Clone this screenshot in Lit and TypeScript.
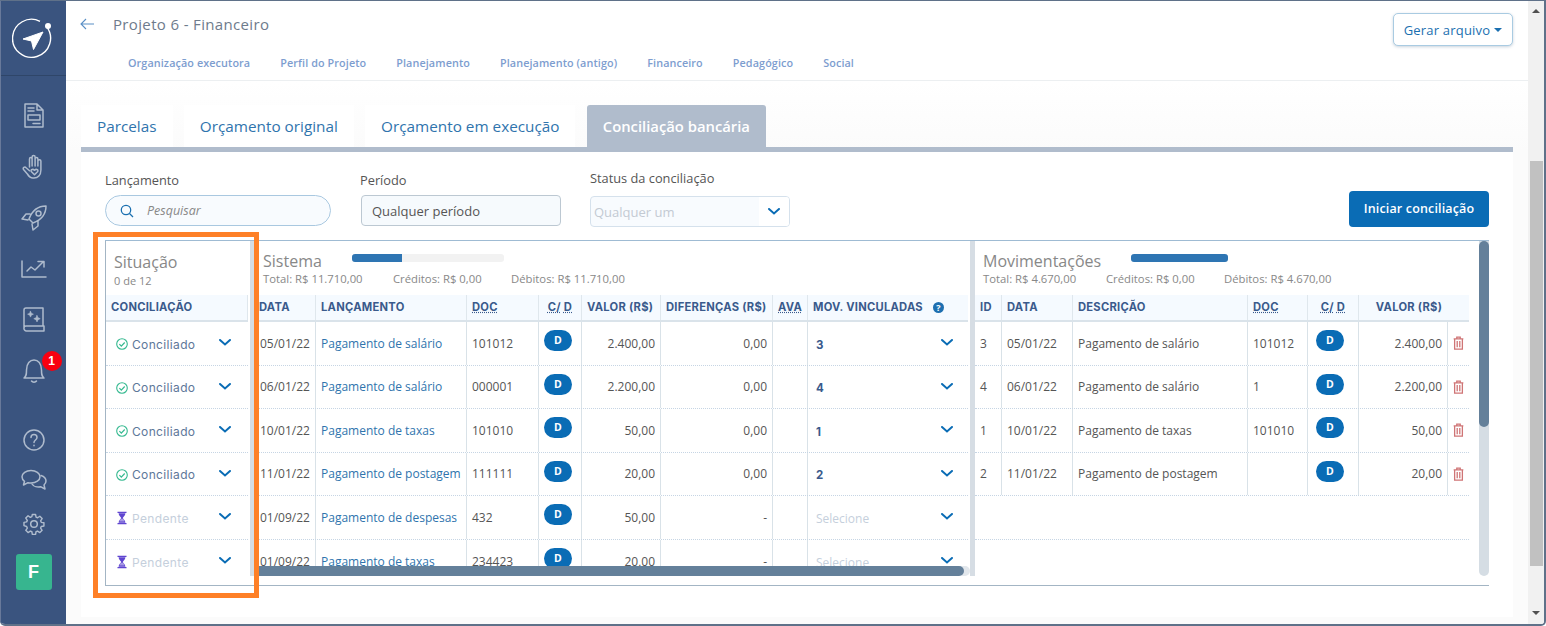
import { LitElement, html, css, svg } from "lit";
import { customElement } from "lit/decorators.js";

const chev = html`<svg class="chev" viewBox="0 0 12 7" width="12" height="7"><path d="M1 1l5 4.5L11 1" fill="none" stroke="#0a6cb5" stroke-width="2" stroke-linecap="round"/></svg>`;
const check = html`<svg class="st" viewBox="0 0 12 12" width="12" height="12"><circle cx="6" cy="6" r="5.3" fill="none" stroke="#35b990" stroke-width="1.100"/><path d="M3.400 6.200l1.900 1.900 3.400-3.600" fill="none" stroke="#35b990" stroke-width="1.200"/></svg>`;
const glass = html`<svg class="st" viewBox="0 0 12 14" width="12" height="14"><path d="M1.500 .7h9v1.300h-9zM1.500 12h9v1.300h-9z" fill="#5f45d0"/><path d="M2.600 2.200h6.800c0 2.200-2 3.400-2.600 4.800.6 1.400 2.600 2.600 2.600 4.800H2.600c0-2.200 2-3.400 2.600-4.800C4.600 5.600 2.600 4.400 2.600 2.200z" fill="#5f45d0"/><path d="M4.800 7.800h2.400l1.300 2.700H3.500z" fill="#fff" opacity=".45"/></svg>`;
const trash = html`<svg viewBox="0 0 10 13" width="11" height="14"><path d="M.5 2.600h9M3.400 2.400V1h3.200v1.400M1.400 2.800v9.400h7.200V2.800M3.800 4.600v5.800M6.200 4.600v5.800" fill="none" stroke="#cf7475" stroke-width="1.200"/></svg>`;

const I = (w: number, h: number, body: unknown) => html`<svg viewBox="0 0 ${w} ${h}" width=${w} height=${h} fill="none" stroke="#aebbcd" stroke-width="1.500" stroke-linejoin="round" stroke-linecap="round">${body}</svg>`;
const icons = {
  doc: I(20, 25, svg`<path d="M1 1h12l6 6v17H1zM13 1v6h6M4 5h6M4 8h6M9 20.500h7"/><rect x="4" y="12" width="12" height="5"/>`),
  hand: I(24, 25, svg`<path d="M7.500 13V5c0-2 2.600-2 2.600 0V3c0-2 3-2 3 0v2c0-2 2.800-2 2.800 0v2c0-1.700 3-1.700 3 0v9c0 5-3 8-7 8h-1c-2.500 0-4-1.500-5.500-4L1.500 15.500c-1-1.800 1.200-3.300 2.600-1.800l3.400 3M10.100 5v7M13.100 5v7M15.900 7v5"/><path d="M12.500 20.800l-3-3c-1.400-1.600.9-3.500 3-1.500 2.100-2 4.400-.1 3 1.500z"/>`),
  rocket: I(26, 26, svg`<path d="M25 1C17 1 11 6 8 14l4 4c8-3 13-9 13-17zM9 9H5L1 14l6 1M17 16v5l-5 4-1-6"/><circle cx="17.500" cy="8.500" r="2.500"/>`),
  chart: I(26, 18, svg`<path d="M1 1v16h24M6 11l4-4 4 3 8-8M17 1.500h6V7"/>`),
  book: I(22, 25, svg`<path d="M1 21V3a2 2 0 0 1 2-2h17v18H3a2 2 0 0 0-2 2 2.500 2.500 0 0 0 2.500 3H21v-5"/><path d="M7.500 4.300l.9 2 2 .9-2 .9-.9 2-.9-2-2-.9 2-.9zM14 8.500l1 2.200 2.200 1-2.200 1-1 2.200-1-2.200-2.200-1 2.200-1z" fill="#aebbcd" stroke-width=".6"/>`),
  bell: I(24, 26, svg`<path d="M2 20c2.500-2 2.500-4 2.500-8C4.500 5.500 8 2 12 2s7.500 3.500 7.500 10c0 4 0 6 2.500 8zM9.500 23c1 1.500 4 1.500 5 0"/>`),
  help: I(22, 22, svg`<circle cx="11" cy="11" r="10"/><path d="M8 8.500C8 6.500 9.500 5.500 11 5.500s3 1 3 3c0 2.500-3 2.500-3 5M11 16.300v.4"/>`),
  chat: I(26, 22, svg`<path d="M10 1.500c5 0 9 2.800 9 6.300s-4 6.200-9 6.200c-1 0-2 0-3-.3L2.500 16l1-3.700C1.700 11 1 9.500 1 7.800 1 4.300 5 1.500 10 1.500z"/><path d="M20 6.500c3 1 5 3 5 5.500 0 1.700-.8 3-2 4l1 4-4.500-2.300c-3 .7-7 0-8.500-2.700"/>`),
  gear: I(22, 22, svg`<circle cx="11" cy="11" r="3.300"/><path d="M9.300 1h3.400l.5 2.800 1.600.7 2.400-1.600 2.400 2.400-1.600 2.400.7 1.600 2.800.5v3.400l-2.800.5-.7 1.600 1.600 2.400-2.400 2.400-2.400-1.600-1.600.7-.5 2.800H9.300l-.5-2.800-1.600-.7-2.400 1.600-2.400-2.400 1.600-2.400-.7-1.600L.5 12.700V9.300l2.800-.5.7-1.600L2.400 4.800l2.400-2.400 2.400 1.600 1.600-.7z" transform="translate(.5 .5) scale(.95)"/>`),
};

const sis = [
  ["05/01/22", "Pagamento de salário", "101012", "2.400,00", "0,00", "3"],
  ["06/01/22", "Pagamento de salário", "000001", "2.200,00", "0,00", "4"],
  ["10/01/22", "Pagamento de taxas", "101010", "50,00", "0,00", "1"],
  ["11/01/22", "Pagamento de postagem", "111111", "20,00", "0,00", "2"],
  ["01/09/22", "Pagamento de despesas", "432", "50,00", "-", ""],
  ["01/09/22", "Pagamento de taxas", "234423", "20,00", "-", ""],
];
const mov = [
  ["3", "05/01/22", "Pagamento de salário", "101012", "2.400,00"],
  ["4", "06/01/22", "Pagamento de salário", "1", "2.200,00"],
  ["1", "10/01/22", "Pagamento de taxas", "101010", "50,00"],
  ["2", "11/01/22", "Pagamento de postagem", "", "20,00"],
];

@customElement("app-root")
export class AppRoot extends LitElement {
  static styles = css`
    :host { display: block; width: 1546px; height: 626px; overflow: hidden; font-family: "Open Sans", sans-serif; color: #555; }
    * { box-sizing: border-box; }
    .win { display: grid; grid-template-columns: 66px 1fr 16px; width: 100%; height: 100%; border: solid #5f7189; border-width: 1px 2px 2px 0; background: #fff; border-bottom-left-radius: 5px; border-bottom-right-radius: 5px; overflow: hidden; }
    .side { background: #3a547f; border-left: 1px solid #68799a; display: flex; flex-direction: column; align-items: center; }
    .logo { width: 100%; height: 75px; border-bottom: 1px solid #2f4669; display: flex; align-items: center; justify-content: center; padding-top: 1px; padding-right: 1px; }
    .slots { padding-top: 14px; display: flex; flex-direction: column; align-items: center; }
    .slot { height: 51px; width: 40px; display: flex; align-items: center; justify-content: center; position: relative; }
    .slot.s { height: 42px; }
    .slot.up2 { padding-bottom: 4px; }
    .slots2 { margin-top: 23px; display: flex; flex-direction: column; align-items: center; }
    .badge { position: absolute; left: 28px; top: 6px; width: 20px; height: 20px; border-radius: 50%; background: #f80010; color: #fff; font: 700 12px/20px "Liberation Sans", sans-serif; text-align: center; }
    .tile { margin-top: 9px; width: 36px; height: 36px; border-radius: 3px; background: #37b58f; color: #fff; font: 700 18px/36px "Liberation Sans", sans-serif; text-align: center; }

    .main { min-width: 0; display: flex; flex-direction: column; background: #fff; }
    .head { height: 80px; border-bottom: 1px solid #eceff1; display: flex; justify-content: space-between; padding: 11px 15px 0 14px; flex: none; }
    .title { display: flex; align-items: center; gap: 19px; height: 24px; font-size: 15px; color: #6e7b8c; letter-spacing: .35px; }
    .nav { display: flex; gap: 30px; margin: 17px 0 0 48px; font-size: 10.800px; font-weight: 600; color: #7d9dcf; line-height: 20px; letter-spacing: .1px; }
    .gen { height: 33px; width: 120px; margin-top: 1px; border: 1px solid #a9cbe2; border-radius: 5px; background: #fff; box-shadow: 0 1px 3px rgba(40,80,120,.25); color: #1a6fb0; font-size: 13px; display: flex; align-items: center; justify-content: center; gap: 4px; letter-spacing: .2px; }
    .caret { width: 0; height: 0; border: 4px solid transparent; border-top-color: #1a6fb0; border-bottom: 0; }

    .content { flex: 1; padding: 24px 15px 0; background: linear-gradient(#fff, #fbfbfb 70px, #fbfbfb); min-height: 0; }
    .tabs { display: flex; height: 42px; font-size: 15.300px; color: #2f74ad; }
    .tab { height: 42px; line-height: 42px; padding: 0 16px; background: #fff; margin-right: 11.300px; }
    .tab.a { background: #b0bccc; color: #fff; font-weight: 600; border-radius: 3px 3px 0 0; margin: 0; font-size: 14.800px; }
    .card { background: #fff; border-top: 5px solid #b0bccc; padding: 20px 24px 0; height: 470px; }
    .filters { display: flex; align-items: flex-end; height: 55px; }
    .f { display: flex; flex-direction: column; }
    .lab { font-size: 12.800px; line-height: 16px; color: #555; margin-bottom: 7px; }
    .f3 .lab { margin-bottom: 10px; }
    .f12 { margin-bottom: 1px; }
    .inp { height: 31px; display: flex; align-items: center; font-size: 13px; }
    .search { width: 226px; border: 1px solid #a9c8e0; border-radius: 16px; background: #f8fbfe; padding-left: 14px; gap: 13px; font-style: italic; font-size: 12.500px; color: #888; }
    .per { width: 200px; margin-left: 30px; border: 1px solid #bcc8d2; border-radius: 4px; background: #f6fafd; padding-left: 10px; color: #555; }
    .perl { margin-left: 29px; }
    .f3 { margin-left: 29px; }
    .status { width: 200px; border: 1px solid #d5e1ec; border-radius: 4px; background: #f8fbfe; padding-left: 3px; color: #c3cad3; justify-content: space-between; overflow: hidden; }
    .status span { display: flex; align-items: center; justify-content: center; width: 30px; height: 100%; background: #fff; }
    .btn { margin-left: auto; width: 140px; height: 36px; background: #0a6cb5; color: #fff; border-radius: 4px; font-size: 12.500px; font-weight: 600; text-align: center; line-height: 36px; letter-spacing: .15px; }

    .panels { position: relative; display: flex; height: 346px; margin-top: 13px; border-top: 1px solid #9fbbd3; border-bottom: 1px solid #a3b5c4; }
    .orange { position: absolute; left: -12px; top: -9px; width: 166px; height: 366px; border: 5px solid #fe8027; pointer-events: none; }
    .sit { width: 145px; flex: none; border-left: 1px solid #a3b5c4; overflow: hidden; }
    .gut { width: 4px; height: 335px; flex: none; background: #d5dde4; }
    .sis { width: 716px; flex: none; height: 335px; position: relative; overflow: hidden; }
    .split { width: 5px; height: 335px; flex: none; background: #d6dde4; }
    .mov { width: 504px; flex: none; height: 335px; overflow: hidden; }
    .vs { width: 10px; height: 335px; flex: none; background: #d5dde4; border-radius: 0 0 5px 5px; }
    .vs div { height: 186px; background: #64809a; border-radius: 5px; }
    .hs { position: absolute; left: 0; bottom: 0; width: 100%; height: 10px; background: #e2e7ec; border-radius: 0 5px 5px 0; }
    .hs div { height: 10px; width: 710px; background: #64809a; border-radius: 0 5px 5px 0; }

    .ph { height: 54px; position: relative; }
    .ptitle { font-size: 16px; line-height: 22px; color: #888; }
    .psub { display: flex; font-size: 11.300px; line-height: 14px; color: #888; white-space: nowrap; }
    .ph.a { padding: 10px 0 0 8px; }
    .ph.a .psub { margin-top: 1px; font-size: 11px; }
    .ph.b { padding: 9px 0 0 9px; }
    .ph.d { padding: 9px 0 0 8px; }
    .ph.b .psub span:nth-child(1) { width: 130px; }
    .ph.b .psub span:nth-child(2) { width: 118px; }
    .ph.d .psub span:nth-child(1) { width: 123px; }
    .ph.d .psub span:nth-child(2) { width: 118px; }
    .prog { position: absolute; top: 13px; height: 8px; border-radius: 3px; background: #f2f2f2; overflow: hidden; }
    .prog div { height: 8px; background: #2e75b3; }
    .ph.b .prog { left: 98px; width: 152px; }
    .ph.b .prog div { width: 50px; }
    .ph.d .prog { left: 156px; width: 97px; }
    .ph.d .prog div { width: 97px; }

    .r { display: grid; align-items: stretch; }
    .hd { height: 27px; background: #f5faff; border-bottom: 2px solid #dae3ea; font: 700 11.200px/25px Inter, sans-serif; color: #3a5a8c; white-space: nowrap; letter-spacing: .25px; }
    .rw { height: 43.500px; border-bottom: 1px dotted #c6d5e4; font-size: 12px; white-space: nowrap; color: #555; }
    .rw.last { border-bottom: 0; }
    .c { padding: 0 5px; display: flex; align-items: center; min-width: 0; border-right: 1px solid #d9e2e8; }
    .c.first { padding-left: 6px; }
    .c.n { border-right: 0; }
    .c.e { justify-content: flex-end; }
    .c.m { justify-content: center; }
    .c.bdg { align-items: flex-start; padding: 8px 0 0 5px; }
    .t4 .c.bdg { padding-left: 8px; }
    .link { color: #2f74ad; }
    abbr { text-decoration: underline dotted; }
    .pill { width: 28px; height: 21px; border-radius: 11px; background: #0a6cb5; color: #fff; font: 700 10.500px/21px "Open Sans", sans-serif; text-align: center; }
    .t3 { grid-template-columns: 62px 151px 72px 43px 79px 112px 35px 160px; width: 714px; }
    .t4 { grid-template-columns: 27px 71px 175px 60px 51px 89px 21px; width: 494px; }
    .t1 { grid-template-columns: 142px; width: 142px; }
    .sitc { padding: 2px 0 0 10px; font: 400 12px Inter, sans-serif; color: #5d7799; gap: 4px; letter-spacing: .35px; border-right: 0; }
    .sitc.p { color: #c5cfdc; }
    .sitc svg.chev { margin: -3px 17px 0 auto; }
    .mv { justify-content: space-between; padding: 0 15px 0 8px; font: 700 11.500px Inter, sans-serif; color: #3a5a8c; border-right: 0; }
    .mv svg { margin-top: -1px; }
    .mv span { padding-top: 3px; }
    .mv .sel { font: 400 12px "Open Sans", sans-serif; color: #c5cfdc; }
    .help { display: inline-block; width: 11px; height: 11px; border-radius: 50%; background: #1e6fb0; color: #fff; font: 700 9px/11px "Open Sans", sans-serif; text-align: center; margin: 0 19px 0 auto; letter-spacing: 0; flex: none; }
    .hmv { display: flex; align-items: center; padding: 0 0 0 5px; }
    .hc { padding: 0 5px; border-right: 1px solid #dfe7ed; overflow: hidden; }
    .hc.n { border-right: 0; }
    .hc.m { text-align: center; }
    .hc.v { grid-column: span 2; text-align: center; padding-right: 15px; }

    .sb { background: #f1f1f1; position: relative; display: flex; flex-direction: column; align-items: center; justify-content: space-between; padding: 8px 0 9px; }
    .up { border: 4px solid transparent; border-top: 0; border-bottom: 4px solid #505050; width: 0; height: 0; }
    .dn { border: 4px solid transparent; border-bottom: 0; border-top: 4px solid #505050; width: 0; height: 0; }
    .thumb { width: 13px; height: 405px; background: #c1c1c1; margin: 143px 0 40px; }
  `;

  render() {
    return html`<div class="win">
      <aside class="side">
        <div class="logo"><svg viewBox="0 0 42 42" width="42" height="42"><path d="M34.500 8.600A19 19 0 1 1 28 3.300" fill="none" stroke="#fff" stroke-width="1.400"/><circle cx="36" cy="8" r="3" fill="#fff"/><path d="M31 14L11 21l8.500 2 2 8.500z" fill="#fff" stroke="#fff" stroke-linejoin="round"/></svg></div>
        <div class="slots">
          <div class="slot">${icons.doc}</div><div class="slot">${icons.hand}</div><div class="slot">${icons.rocket}</div><div class="slot">${icons.chart}</div><div class="slot">${icons.book}</div>
          <div class="slot">${icons.bell}<div class="badge">1</div></div>
        </div>
        <div class="slots2">
          <div class="slot s">${icons.help}</div><div class="slot s up2">${icons.chat}</div><div class="slot s">${icons.gear}</div>
          <div class="tile">F</div>
        </div>
      </aside>
      <main class="main">
        <header class="head">
          <div>
            <div class="title"><svg viewBox="0 0 14 12" width="14" height="12"><path d="M14 6H1M6 1L1 6l5 5" fill="none" stroke="#5b90c6" stroke-width="1.100"/></svg><span>Projeto 6 - Financeiro</span></div>
            <nav class="nav"><span>Organização executora</span><span>Perfil do Projeto</span><span>Planejamento</span><span>Planejamento (antigo)</span><span>Financeiro</span><span>Pedagógico</span><span>Social</span></nav>
          </div>
          <div class="gen">Gerar arquivo <i class="caret"></i></div>
        </header>
        <section class="content">
          <div class="tabs"><div class="tab">Parcelas</div><div class="tab">Orçamento original</div><div class="tab">Orçamento em execução</div><div class="tab a">Conciliação bancária</div></div>
          <div class="card">
            <div class="filters">
              <div class="f f12"><div class="lab">Lançamento</div><div class="inp search"><svg viewBox="0 0 14 14" width="14" height="14"><circle cx="6" cy="6" r="4.700" fill="none" stroke="#1a6fb0" stroke-width="1.300"/><path d="M9.500 9.500L13 13" stroke="#1a6fb0" stroke-width="1.300"/></svg>Pesquisar</div></div>
              <div class="f f12"><div class="lab perl">Período</div><div class="inp per">Qualquer período</div></div>
              <div class="f f3"><div class="lab">Status da conciliação</div><div class="inp status">Qualquer um<span>${chev}</span></div></div>
              <div class="btn">Iniciar conciliação</div>
            </div>
            <div class="panels">
              <div class="sit">
                <div class="ph a"><div class="ptitle">Situação</div><div class="psub">0 de 12</div></div>
                <div class="r t1 hd"><div class="hc">CONCILIAÇÃO</div></div>
                ${sis.map((_, i) => html`<div class="r t1 rw ${i === 5 ? "last" : ""}"><div class="c sitc ${i > 3 ? "p" : ""}">${i > 3 ? glass : check}<span>${i > 3 ? "Pendente" : "Conciliado"}</span>${chev}</div></div>`)}
              </div>
              <div class="gut"></div>
              <div class="sis">
                <div class="ph b"><div class="ptitle">Sistema</div><div class="psub"><span>Total: R$ 11.710,00</span><span>Créditos: R$ 0,00</span><span>Débitos: R$ 11.710,00</span></div><div class="prog"><div></div></div></div>
                <div class="r t3 hd"><div class="hc">DATA</div><div class="hc">LANÇAMENTO</div><div class="hc"><abbr>DOC</abbr></div><div class="hc m"><abbr>C/</abbr> <abbr>D</abbr></div><div class="hc">VALOR (R$)</div><div class="hc">DIFERENÇAS (R$)</div><div class="hc"><abbr>AVA</abbr></div><div class="hc n hmv">MOV. VINCULADAS<span class="help">?</span></div></div>
                ${sis.map((r, i) => html`<div class="r t3 rw ${i === 5 ? "last" : ""}">
                  <div class="c first">${r[0]}</div><div class="c link">${r[1]}</div><div class="c">${r[2]}</div><div class="c bdg"><div class="pill">D</div></div><div class="c e">${r[3]}</div><div class="c e">${r[4]}</div><div class="c"></div>
                  <div class="c mv n">${r[5] ? html`<span>${r[5]}</span>` : html`<span class="sel">Selecione</span>`}${chev}</div></div>`)}
                <div class="hs"><div></div></div>
              </div>
              <div class="split"></div>
              <div class="mov">
                <div class="ph d"><div class="ptitle">Movimentações</div><div class="psub"><span>Total: R$ 4.670,00</span><span>Créditos: R$ 0,00</span><span>Débitos: R$ 4.670,00</span></div><div class="prog"><div></div></div></div>
                <div class="r t4 hd"><div class="hc">ID</div><div class="hc">DATA</div><div class="hc">DESCRIÇÃO</div><div class="hc"><abbr>DOC</abbr></div><div class="hc m"><abbr>C/</abbr> <abbr>D</abbr></div><div class="hc n v">VALOR (R$)</div></div>
                ${mov.map((r) => html`<div class="r t4 rw"><div class="c">${r[0]}</div><div class="c">${r[1]}</div><div class="c">${r[2]}</div><div class="c">${r[3]}</div><div class="c bdg"><div class="pill">D</div></div><div class="c e">${r[4]}</div><div class="c n m">${trash}</div></div>`)}
                <div class="r t4 rw"></div><div class="r t4 rw"></div>
              </div>
              <div class="vs"><div></div></div>
              <div class="orange"></div>
            </div>
          </div>
        </section>
      </main>
      <div class="sb"><i class="up"></i><div class="thumb"></div><i class="dn"></i></div>
    </div>`;
  }
}
